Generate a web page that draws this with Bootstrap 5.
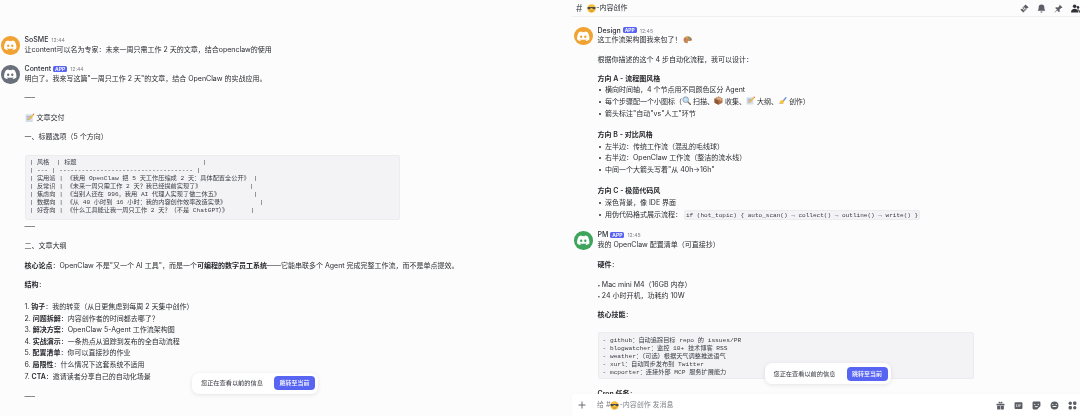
<!DOCTYPE html>
<html lang="zh-CN">
<head>
<meta charset="utf-8">
<title>内容创作</title>
<link href="https://cdn.jsdelivr.net/npm/bootstrap@5.3.0/dist/css/bootstrap.min.css" rel="stylesheet">
<style>
html,body{height:416px;overflow:hidden}
body{background:#fcfcfc;color:#2a2c31;font-family:Inter,"Noto Sans CJK SC",sans-serif;font-size:7px;line-height:9.75px}
.panes{height:416px;filter:blur(.3px)}
.pane-left{width:560px;flex:none;padding-top:35px}
.pane-right{flex:1 1 auto;min-width:0}
.chan-head{height:17px;flex:none;border-bottom:1px solid #f0f0f1;margin-left:12px;padding:0 0 0 4px;font-size:7px}
.chan-hash{color:#60626a;font-size:10px;margin-right:5px;line-height:1}
.head-icons{gap:8px}
.msg-scroll{flex:1 1 auto;min-height:0;overflow:hidden;padding-top:8.5px}
.msg-row{gap:5px;padding-left:1px}
.msg-row.pad-r{padding-left:14px}
.msg-gap{margin-top:9.5px}
.avatar-disc{width:18.5px;height:18.5px;flex:none;border-radius:50%;margin-top:1px}
.av-orange{background:#f0a232}.av-grey{background:#6a6f7c}.av-green{background:#3fa45c}
.msg-body{min-width:0;flex:1 1 auto}
.name-line{height:9.75px;white-space:nowrap}
.nick{font-weight:500;color:#30323a}
.stamp{font-size:5.2px;color:#7e8089;margin-left:1px}
.app-tag{background:#5865f2;color:#fff;border-radius:1.5px;font-size:5px;font-weight:600;padding:0 2px;line-height:6px;display:inline-block;vertical-align:top;margin:1.5px 0 0 0}
.para{margin:0 0 9.8px}
.para.tight{margin-bottom:0}
.para.lead-in{margin-bottom:10.8px}
.dir-head{margin:0;line-height:11.7px}
.steps{margin:0 0 10.2px;padding:0;list-style:none;line-height:11.6px}
.steps li{height:11.6px}
.dots{margin:0 0 9.7px;padding:0;list-style:none;line-height:11.7px}
.dots li{padding-left:7.5px;position:relative;height:11.7px;white-space:nowrap}
.dots li::before{content:"";position:absolute;left:1.5px;top:5px;width:2px;height:2px;border-radius:50%;background:#2e3035}
.plain-lines{margin:0 0 8.8px}
.mini-dot{font-size:5px;margin-right:1.5px}
.code-wrap{background:#f3f3f6;border:1px solid #ececf0;border-radius:2px;font-family:"Liberation Mono","Noto Sans CJK SC",monospace;font-size:6.2px;line-height:8px;white-space:pre;color:#3a3c44;margin:0;overflow:hidden;padding:3.5px 4px}
.box-a{width:375px;margin:12.5px 0 2px}
.box-b{width:376px;margin:12.5px 0 10px;height:47px}
.inline-code{background:#f3f3f6;border:1px solid #ececf0;border-radius:2px;font-family:"Liberation Mono","Noto Sans CJK SC",monospace;font-size:6.05px;padding:.5px 1px;color:#3a3c44}
.list-head{margin:0 0 11px}
strong{font-weight:600;color:#26272c}
.emo{width:9px;height:9px;vertical-align:top;margin-top:.4px;display:inline-block}
.emo-big{width:9.5px;height:9.5px;margin-top:0;margin-right:2.5px}
.composer{height:22px;flex:none;background:#fff;margin-left:12px;border-top-left-radius:4px;padding:0 3px 0 6px;color:#82848c;box-shadow:0 0 3px rgba(0,0,0,.03)}
.plus-mark{width:8px;height:8px;margin-right:11px;flex:none}
.tool-icons{gap:9px}
.ui-ico{width:9px;height:9px;fill:#5c5e66;display:block}
.jump-pill{position:absolute;background:#fff;border-radius:7px;box-shadow:0 1px 4px rgba(0,0,0,.1);height:21px;width:126px;padding:0 3px 0 9px;font-size:6.2px;color:#34363e}
.pill-l{left:192px;top:372.5px}
.pill-r{left:764.5px;top:363px}
.jump-btn{background:#5865f2;color:#fff;border:0;border-radius:4px;font-size:6px;font-weight:500;padding:0;width:41px;height:14px;line-height:14px}
</style>
</head>
<body>
<svg width="0" height="0" class="position-absolute">
<symbol id="disc" viewBox="-4 -4 24 24"><path fill="#fff" d="M13.545 2.907a13.2 13.2 0 0 0-3.257-1.011.05.05 0 0 0-.052.025c-.141.25-.297.577-.406.833a12.2 12.2 0 0 0-3.658 0 8 8 0 0 0-.412-.833.05.05 0 0 0-.052-.025c-1.125.194-2.22.534-3.257 1.011a.04.04 0 0 0-.021.018C.356 6.024-.213 9.047.066 12.032q.003.022.021.037a13.3 13.3 0 0 0 3.995 2.02.05.05 0 0 0 .056-.019q.463-.63.818-1.329a.05.05 0 0 0-.01-.059l-.018-.011a9 9 0 0 1-1.248-.595.05.05 0 0 1-.02-.066l.015-.019q.127-.095.248-.195a.05.05 0 0 1 .051-.007c2.619 1.196 5.454 1.196 8.041 0a.05.05 0 0 1 .053.007q.121.1.248.195a.05.05 0 0 1-.004.085 8 8 0 0 1-1.249.594.05.05 0 0 0-.03.03.05.05 0 0 0 .003.041c.24.465.515.909.817 1.329a.05.05 0 0 0 .056.019 13.2 13.2 0 0 0 4.001-2.02.05.05 0 0 0 .021-.037c.334-3.451-.559-6.449-2.366-9.106a.03.03 0 0 0-.02-.019m-8.198 7.307c-.789 0-1.438-.724-1.438-1.612s.637-1.613 1.438-1.613c.807 0 1.45.73 1.438 1.613 0 .888-.637 1.612-1.438 1.612m5.316 0c-.788 0-1.438-.724-1.438-1.612s.637-1.613 1.438-1.613c.807 0 1.451.73 1.438 1.613 0 .888-.631 1.612-1.438 1.612"/></symbol>
<symbol id="memo" viewBox="0 0 16 16"><rect x="1" y="2" width="12" height="13" rx="1" fill="#d5dde6"/><path d="M3 6h8M3 8.5h8M3 11h5" stroke="#8c98a6" stroke-width="1"/><path d="M14.5.8 16 2.3 8 11l-2.6 1 .8-2.8z" fill="#f4b83a"/><path d="M14.5.8 16 2.3l-1.2 1.2-1.5-1.5z" fill="#e0565b"/></symbol>
<symbol id="lens" viewBox="0 0 16 16"><path d="m10 10 5 5" stroke="#7a6a55" stroke-width="2.4" stroke-linecap="round"/><circle cx="6.5" cy="6.5" r="5" fill="#bfe0f5" stroke="#8d9aa8" stroke-width="1.6"/></symbol>
<symbol id="box" viewBox="0 0 16 16"><path d="M8 1 15 4.5v7.5L8 15.500 1 12V4.500z" fill="#b0714a"/><path d="M8 8v7.500L1 12V4.500z" fill="#8f5636"/><path d="M8 1 15 4.500 8 8 1 4.500z" fill="#cd9470"/><path d="M4.500 2.800 11.500 6.300V9L13 8.300V5.500L6 2z" fill="#e9cfae"/></symbol>
<symbol id="hand" viewBox="0 0 16 16"><path d="M1 13.500h7l2-1H3z" fill="#4b83d6"/><path d="M14 1.500 7.500 9 6.500 12l3-1.200L15.500 3z" fill="#5b93e0"/><path d="M3 12c0-3 2.500-5 5-5l3 1.500-1 4-3 1.500H4z" fill="#f6c243"/></symbol>
<symbol id="palette" viewBox="0 0 16 16"><path d="M8 2C3.800 2 .8 4.800 .8 8.500S3.800 14 6.500 14c1.500 0 1.800-1 1.500-2-.3-1.300.5-2 1.800-2h2.500c1.800 0 2.900-1 2.900-2.500C14.700 4.300 12 2 8 2z" fill="#c48a5c"/><circle cx="4" cy="7" r="1.200" fill="#e05252"/><circle cx="6.500" cy="4.500" r="1.200" fill="#f4c430"/><circle cx="10" cy="4.500" r="1.200" fill="#4caf50"/><circle cx="12.500" cy="7" r="1.200" fill="#3f7fd6"/></symbol>
<symbol id="cool" viewBox="0 0 16 16"><circle cx="8" cy="8" r="7.500" fill="#f5bf3c"/><path d="M1 5.500h14v2c0 1-1 2-2.500 2S10 8.500 9 7H7C6 8.500 5 9.500 3.500 9.500S1 8.500 1 7.500z" fill="#4a4a50"/><path d="M5 11.500c2 1.500 4 1.500 6 0" stroke="#8a5a1e" stroke-width="1" fill="none"/></symbol>
</svg>

<div class="panes d-flex position-relative">
  <section class="pane-left overflow-hidden">
    <div class="msg-row d-flex">
      <svg class="avatar-disc av-orange"><use href="#disc"/></svg>
      <div class="msg-body">
        <div class="name-line"><span class="nick">SoSME</span> <span class="stamp">12:44</span></div>
        <p class="para tight">让content可以名为专家：未来一周只需工作 2 天的文章，结合openclaw的使用</p>
      </div>
    </div>
    <div class="msg-row d-flex msg-gap">
      <svg class="avatar-disc av-grey"><use href="#disc"/></svg>
      <div class="msg-body">
        <div class="name-line"><span class="nick">Content</span> <span class="app-tag">APP</span> <span class="stamp">12:44</span></div>
        <p class="para">明白了。我来写这篇"一周只工作 2 天"的文章，结合 OpenClaw 的实战应用。</p>
        <p class="para">–––</p>
        <p class="para"><svg class="emo emo-big"><use href="#memo"/></svg>文章交付</p>
        <p class="para mb-0">一、标题选项（5 个方向）</p>
        <pre class="code-wrap box-a">| 风格  | 标题                                  |
| --- | ------------------------------------ |
| 实用派 | 《我用 OpenClaw 把 5 天工作压缩成 2 天：具体配置全公开》 |
| 反常识 | 《未来一周只需工作 2 天？我已经提前实现了》             |
| 焦虑向 | 《当别人还在 996，我用 AI 代理人实现了做二休五》         |
| 数据向 | 《从 40 小时到 16 小时：我的内容创作效率改造实录》         |
| 好奇向 | 《什么工具能让我一周只工作 2 天？（不是 ChatGPT）》      |</pre>
        <p class="para">–––</p>
        <p class="para">二、文章大纲</p>
        <p class="para"><strong>核心论点</strong>：OpenClaw 不是"又一个 AI 工具"，而是一个<strong>可编程的数字员工系统</strong>——它能串联多个 Agent 完成完整工作流，而不是单点提效。</p>
        <p class="para list-head"><strong>结构</strong>：</p>
        <ol class="steps">
          <li>1. <strong>钩子</strong>：我的转变（从日更焦虑到每周 2 天集中创作）</li>
          <li>2. <strong>问题拆解</strong>：内容创作者的时间都去哪了？</li>
          <li>3. <strong>解决方案</strong>：OpenClaw 5-Agent 工作流架构图</li>
          <li>4. <strong>实战演示</strong>：一条热点从追踪到发布的全自动流程</li>
          <li>5. <strong>配置清单</strong>：你可以直接抄的作业</li>
          <li>6. <strong>局限性</strong>：什么情况下这套系统不适用</li>
          <li>7. <strong>CTA</strong>：邀请读者分享自己的自动化场景</li>
        </ol>
        <p class="para">–––</p>
      </div>
    </div>
  </section>

  <section class="pane-right d-flex flex-column">
    <header class="chan-head d-flex align-items-center justify-content-between">
      <div class="d-flex align-items-center"><span class="chan-hash">#</span><svg class="emo"><use href="#cool"/></svg><span>-内容创作</span></div>
      <div class="head-icons d-flex">
        <svg class="ui-ico" viewBox="0 0 16 16"><path d="M10 .8 15.200 6l-1.400 1.400a1.400 1.400 0 0 0-2 2L6 15.200.8 10l1.400-1.400a1.400 1.400 0 0 0 2-2zM7 5.500 6 6.500l3.500 3.500 1-1zM5 7.500l-1 1L7.500 12l1-1z"/></svg>
        <svg class="ui-ico" viewBox="0 0 16 16"><path d="M8 1a5 5 0 0 0-5 5c0 3.500-1.500 5-2 6h14c-.5-1-2-2.500-2-6a5 5 0 0 0-5-5zM6 13.500a2 2 0 0 0 4 0z"/></svg>
        <svg class="ui-ico" viewBox="0 0 16 16"><path d="M10 1l5 5-1.200 1.200-1-.3-3 3 .4 3.600-1.200 1.200-3.200-3.200L1.500 15l-.5-.5 4.500-4.400L2.300 6.900l1.200-1.200 3.600.4 3-3-.3-1z"/></svg>
        <svg class="ui-ico" viewBox="0 0 16 16"><circle cx="6.500" cy="4" r="3.200" fill="#2f3036"/><path d="M0 15c0-4.500 3-6.500 6.500-6.500S13 10.500 13 15z" fill="#2f3036"/><circle cx="12.500" cy="6" r="2.300" fill="#2f3036"/><path d="M11 9.500c2.500-.5 5 1.500 5 5.500h-2c0-2-.8-4-3-5.500z" fill="#2f3036"/></svg>
      </div>
    </header>
    <div class="msg-scroll">
      <div class="msg-row pad-r d-flex">
        <svg class="avatar-disc av-orange"><use href="#disc"/></svg>
        <div class="msg-body">
          <div class="name-line"><span class="nick">Design</span> <span class="app-tag">APP</span> <span class="stamp">12:45</span></div>
          <p class="para">这工作流架构图我来包了！ <svg class="emo emo-big"><use href="#palette"/></svg></p>
          <p class="para mb-2">根据你描述的这个 4 步自动化流程，我可以设计：</p>
          <p class="dir-head"><strong>方向 A - 流程图风格</strong></p>
          <ul class="dots">
            <li>横向时间轴，4 个节点用不同颜色区分 Agent</li>
            <li>每个步骤配一个小图标（<svg class="emo"><use href="#lens"/></svg> 扫描、<svg class="emo"><use href="#box"/></svg> 收集、<svg class="emo"><use href="#memo"/></svg> 大纲、<svg class="emo"><use href="#hand"/></svg> 创作）</li>
            <li>箭头标注"自动"vs"人工"环节</li>
          </ul>
          <p class="dir-head"><strong>方向 B - 对比风格</strong></p>
          <ul class="dots">
            <li>左半边：传统工作流（混乱的毛线球）</li>
            <li>右半边：OpenClaw 工作流（整洁的流水线）</li>
            <li>中间一个大箭头写着"从 40h→16h"</li>
          </ul>
          <p class="dir-head"><strong>方向 C - 极简代码风</strong></p>
          <ul class="dots mb-0">
            <li>深色背景，像 IDE 界面</li>
            <li>用伪代码格式展示流程： <code class="inline-code">if (hot_topic) { auto_scan() → collect() → outline() → write() }</code></li>
          </ul>
        </div>
      </div>
      <div class="msg-row pad-r d-flex msg-gap">
        <svg class="avatar-disc av-green"><use href="#disc"/></svg>
        <div class="msg-body">
          <div class="name-line"><span class="nick">PM</span> <span class="app-tag">APP</span> <span class="stamp">12:45</span></div>
          <p class="para lead-in">我的 OpenClaw 配置清单（可直接抄）</p>
          <p class="para"><strong>硬件</strong>：</p>
          <p class="plain-lines"><span class="mini-dot">•</span>Mac mini M4（16GB 内存）<br><span class="mini-dot">•</span>24 小时开机，功耗约 10W</p>
          <p class="para mb-0"><strong>核心技能</strong>：</p>
          <pre class="code-wrap box-b">- github：自动追踪目标 repo 的 issues/PR
- blogwatcher：监控 10+ 技术博客 RSS
- weather：（可选）根据天气调整推送语气
- xurl：自动同步发布到 Twitter
- mcporter：连接外部 MCP 服务扩展能力</pre>
          <p class="para"><strong>Cron 任务</strong>：</p>
        </div>
      </div>
    </div>
    <footer class="composer d-flex align-items-center justify-content-between">
      <div class="d-flex align-items-center">
        <svg class="plus-mark" viewBox="0 0 8 8"><path d="M4 .5v7M.5 4h7" stroke="#6a6c74" stroke-width="1"/></svg>
        <span>给 #<svg class="emo"><use href="#cool"/></svg>-内容创作 发消息</span>
      </div>
      <div class="tool-icons d-flex">
        <svg class="ui-ico" viewBox="0 0 16 16"><path d="M1 5h14v3H1zM2 9h5.500v6H3a1 1 0 0 1-1-1zM8.500 9H14v5a1 1 0 0 1-1 1H8.500zM5 1.500a2 2 0 0 1 3 2 2 2 0 0 1 3-2c1 1 .5 2.500-1 2.500H6c-1.500 0-2-1.500-1-2.500z"/></svg>
        <svg class="ui-ico" viewBox="0 0 16 16"><path fill-rule="evenodd" d="M2.500 2h11A1.500 1.500 0 0 1 15 3.500v9a1.500 1.500 0 0 1-1.500 1.500h-11A1.500 1.500 0 0 1 1 12.500v-9A1.500 1.500 0 0 1 2.500 2zM4 6v4h2V9H5V7h1V6zm3.500 0v4h1V6zm2 0v4h1V8.500H12v-1h-1.500V7H12V6z"/></svg>
        <svg class="ui-ico" viewBox="0 0 16 16"><path fill-rule="evenodd" d="M3 1h10a2 2 0 0 1 2 2v6l-6 6H3a2 2 0 0 1-2-2V3a2 2 0 0 1 2-2zm2 4a1 1 0 1 0 0 2 1 1 0 0 0 0-2zm6 0a1 1 0 1 0 0 2 1 1 0 0 0 0-2zM4.500 9.500c1 2 5 2.500 7 0z"/></svg>
        <svg class="ui-ico" viewBox="0 0 16 16"><path fill-rule="evenodd" d="M8 1a7 7 0 1 1 0 14A7 7 0 0 1 8 1zM5 5a1 1 0 1 0 0 2 1 1 0 0 0 0-2zm6 0a1 1 0 1 0 0 2 1 1 0 0 0 0-2zM4 9c.5 2.500 7.500 2.500 8 0z"/></svg>
        <svg class="ui-ico" viewBox="0 0 16 16"><rect x="1" y="1" width="6" height="6" rx="3"/><rect x="9" y="1" width="6" height="6" rx="2"/><rect x="1" y="9" width="6" height="6" rx="2"/><rect x="9" y="9" width="6" height="6" rx="3"/></svg>
      </div>
    </footer>
  </section>

  <aside class="jump-pill pill-l d-flex align-items-center justify-content-between"><span>您正在查看以前的信息</span><button type="button" class="jump-btn">跳转至当前</button></aside>
  <aside class="jump-pill pill-r d-flex align-items-center justify-content-between"><span>您正在查看以前的信息</span><button type="button" class="jump-btn">跳转至当前</button></aside>
</div>
<script src="https://cdn.jsdelivr.net/npm/bootstrap@5.3.0/dist/js/bootstrap.bundle.min.js"></script>
</body>
</html>
